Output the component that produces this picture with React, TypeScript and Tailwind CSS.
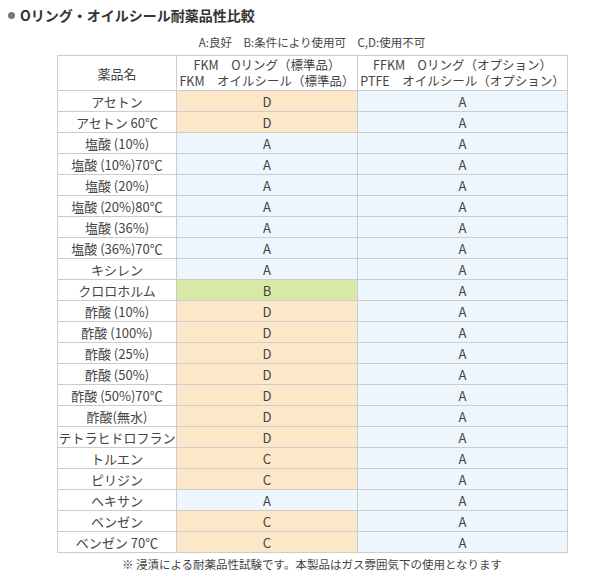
import * as React from "react";

const ROWS: [string, string, string][] = [
  ["アセトン", "D", "A"],
  ["アセトン 60℃", "D", "A"],
  ["塩酸 (10%)", "A", "A"],
  ["塩酸 (10%)70℃", "A", "A"],
  ["塩酸 (20%)", "A", "A"],
  ["塩酸 (20%)80℃", "A", "A"],
  ["塩酸 (36%)", "A", "A"],
  ["塩酸 (36%)70℃", "A", "A"],
  ["キシレン", "A", "A"],
  ["クロロホルム", "B", "A"],
  ["酢酸 (10%)", "D", "A"],
  ["酢酸 (100%)", "D", "A"],
  ["酢酸 (25%)", "D", "A"],
  ["酢酸 (50%)", "D", "A"],
  ["酢酸 (50%)70℃", "D", "A"],
  ["酢酸(無水)", "D", "A"],
  ["テトラヒドロフラン", "D", "A"],
  ["トルエン", "C", "A"],
  ["ピリジン", "C", "A"],
  ["ヘキサン", "A", "A"],
  ["ベンゼン", "C", "A"],
  ["ベンゼン 70℃", "C", "A"],
];

function gradeBg(g: string) {
  if (g === "A") return "bg-[#eef6fd]";
  if (g === "B") return "bg-[#d7e8a7]";
  return "bg-[#fde7c9]";
}

export default function App() {
  return (
    <div
      className="w-[604px] h-[585px] bg-white text-[#444] overflow-hidden"
      style={{ fontFamily: '"Noto Sans CJK JP", "Noto Sans", sans-serif' }}
    >
      <h2 className="flex items-center gap-[5px] pl-[8px] pt-[6px] h-[24px] text-[14px] font-bold leading-none text-[#333]">
        <span className="inline-block size-[7px] rounded-full bg-[#777]" />
        Oリング・オイルシール耐薬品性比較
      </h2>
      <div className="w-[510px] ml-[57px]">
        <p className="mt-[8px] h-[23px] text-center text-[11.5px] leading-[20px]">
          A:良好　B:条件により使用可　C,D:使用不可
        </p>
        <table className="w-[510px] table-fixed border-collapse text-center text-[13px] leading-none">
          <colgroup>
            <col className="w-[119px]" />
            <col className="w-[181px]" />
            <col className="w-[210px]" />
          </colgroup>
          <thead>
            <tr className="h-[35px]">
              <th className="border border-[#ccc] p-0 font-normal text-[13px]">薬品名</th>
              <th className="border border-[#ccc] p-0 font-normal text-[12.5px] leading-[16px]">
                <div>FKM　Oリング（標準品）</div>
                <div>FKM　オイルシール（標準品）</div>
              </th>
              <th className="border border-[#ccc] p-0 font-normal text-[12.5px] leading-[16px]">
                <div>FFKM　Oリング（オプション）</div>
                <div>PTFE　オイルシール（オプション）</div>
              </th>
            </tr>
          </thead>
          <tbody>
            {ROWS.map(([name, a, b]) => (
              <tr key={name} className="h-[21px]">
                <td className="border border-[#ccc] p-0">{name}</td>
                <td className={`border border-[#ccc] p-0 ${gradeBg(a)}`}>{a}</td>
                <td className={`border border-[#ccc] p-0 ${gradeBg(b)}`}>{b}</td>
              </tr>
            ))}
          </tbody>
        </table>
        <p className="mt-[4px] text-center text-[11.5px] leading-[14px]">
          ※ 浸漬による耐薬品性試験です。本製品はガス雰囲気下の使用となります
        </p>
      </div>
    </div>
  );
}
